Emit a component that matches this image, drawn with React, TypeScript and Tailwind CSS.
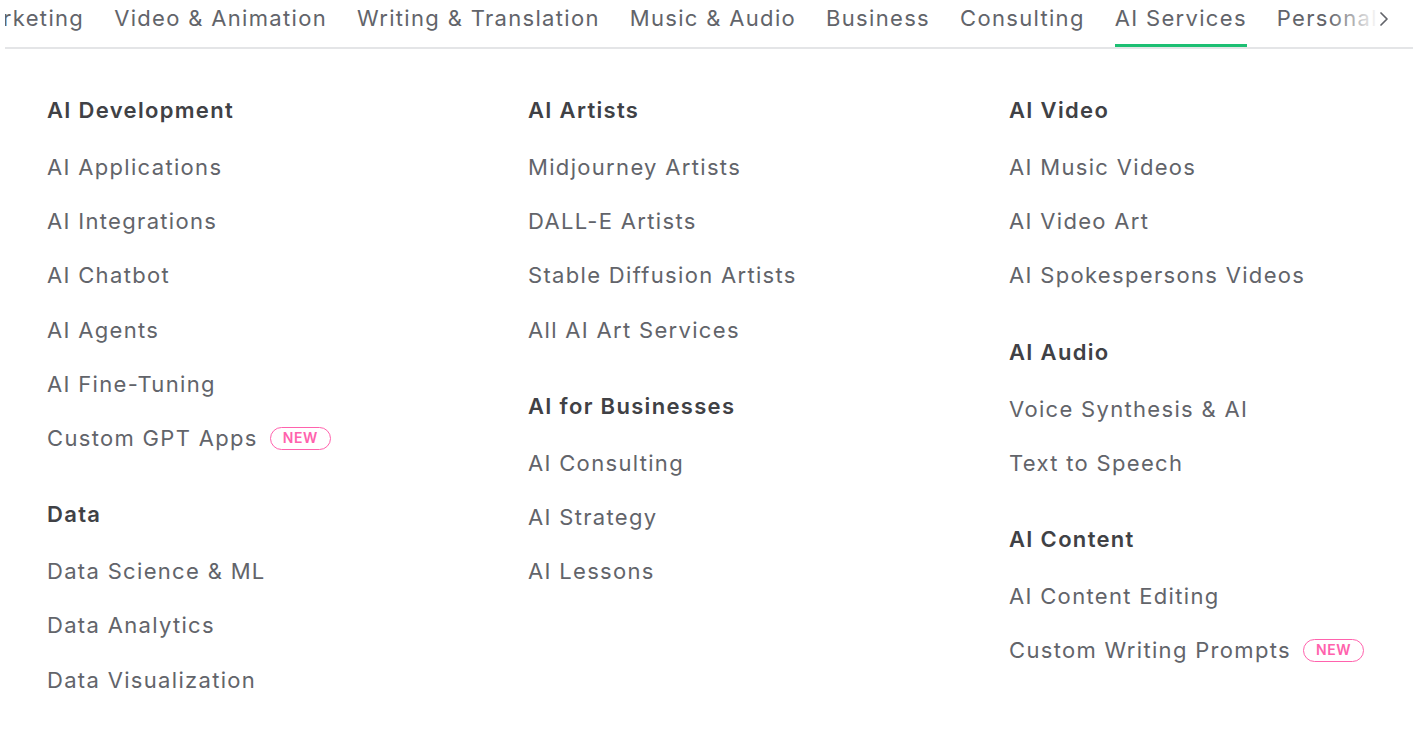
import { ChevronRight } from "lucide-react"

const navItems = [
  "Marketing",
  "Video & Animation",
  "Writing & Translation",
  "Music & Audio",
  "Business",
  "Consulting",
  "AI Services",
  "Personal Growth",
]

type Section = { title: string; items: { label: string; isNew?: boolean }[] }

const columns: Section[][] = [
  [
    {
      title: "AI Development",
      items: [
        { label: "AI Applications" },
        { label: "AI Integrations" },
        { label: "AI Chatbot" },
        { label: "AI Agents" },
        { label: "AI Fine-Tuning" },
        { label: "Custom GPT Apps", isNew: true },
      ],
    },
    {
      title: "Data",
      items: [{ label: "Data Science & ML" }, { label: "Data Analytics" }, { label: "Data Visualization" }],
    },
  ],
  [
    {
      title: "AI Artists",
      items: [
        { label: "Midjourney Artists" },
        { label: "DALL-E Artists" },
        { label: "Stable Diffusion Artists" },
        { label: "All AI Art Services" },
      ],
    },
    {
      title: "AI for Businesses",
      items: [{ label: "AI Consulting" }, { label: "AI Strategy" }, { label: "AI Lessons" }],
    },
  ],
  [
    {
      title: "AI Video",
      items: [{ label: "AI Music Videos" }, { label: "AI Video Art" }, { label: "AI Spokespersons Videos" }],
    },
    {
      title: "AI Audio",
      items: [{ label: "Voice Synthesis & AI" }, { label: "Text to Speech" }],
    },
    {
      title: "AI Content",
      items: [{ label: "AI Content Editing" }, { label: "Custom Writing Prompts", isNew: true }],
    },
  ],
]

const NewBadge = () => (
  <span className="ml-[12px] inline-flex h-[23px] items-center rounded-full border-[1.5px] border-[#ff62ad] px-[12px] text-[14px] font-semibold tracking-[0.04em] text-[#ff62ad]">
    NEW
  </span>
)

export default function App() {
  return (
    <div className="min-h-[738px] bg-white text-[#62646a]" style={{ fontFamily: "Inter, 'Noto Sans', sans-serif" }}>
      {/* category nav */}
      <div className="relative mx-[5px] h-[49px] overflow-hidden border-b-2 border-[#e4e5e7]">
        <ul className="-ml-[37px] flex h-full gap-[30px] whitespace-nowrap">
          {navItems.map((item) => (
            <li
              key={item}
              className={
                item === "AI Services"
                  ? "h-full border-b-[3px] border-[#1dbf73] pt-[4px] text-[22px] leading-[28px] tracking-[0.06em]"
                  : "h-full pt-[4px] text-[22px] leading-[28px] tracking-[0.06em]"
              }
            >
              {item}
            </li>
          ))}
        </ul>
        <div className="absolute top-0 right-0 flex h-[46px] w-[85px] items-start bg-gradient-to-r from-transparent via-white via-60% to-white pt-[7px] pl-[44px]">
          <ChevronRight size={24} strokeWidth={1.75} className="text-[#62646a]" />
        </div>
      </div>

      {/* mega menu */}
      <div className="grid grid-cols-[481px_481px_1fr] pt-[45px] pl-[47px]">
        {columns.map((sections, ci) => (
          <div key={ci} className="flex flex-col gap-[33px]">
            {sections.map((s) => (
              <div key={s.title}>
                <h3 className="mb-[14px] text-[22px] leading-[32px] font-semibold tracking-[0.06em] text-[#404145]">
                  {s.title}
                </h3>
                <ul>
                  {s.items.map((it) => (
                    <li key={it.label} className="flex items-center py-[11px] text-[22px] leading-[32.2px] tracking-[0.06em]">
                      {it.label}
                      {it.isNew && <NewBadge />}
                    </li>
                  ))}
                </ul>
              </div>
            ))}
          </div>
        ))}
      </div>
    </div>
  )
}
